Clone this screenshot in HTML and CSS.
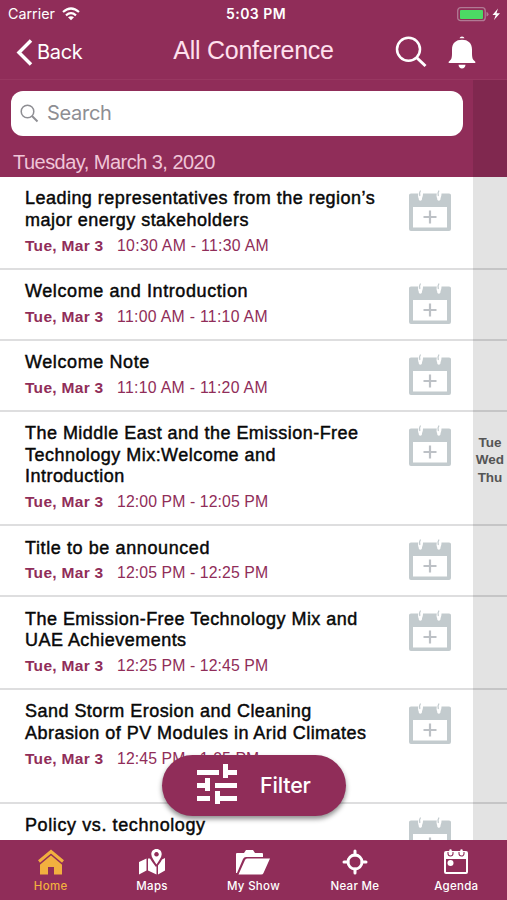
FILE: index.html
```html
<!DOCTYPE html>
<html lang="en">
<head>
<meta charset="utf-8">
<title>All Conference</title>
<link rel="stylesheet" href="styles.css">
</head>
<body>
<svg class="defs" width="0" height="0">
  <symbol id="cal" viewBox="0 0 42 42">
    <path fill="#c3cbce" d="M2 3.500H9.300C8.800 6 9.200 7 9.700 8.500C9.500 11.500 13.200 11.500 13 8.500C13.300 7 14 6 14 3.500H27.800C27.300 6 27.700 7 28.200 8.500C28 11.500 31.700 11.500 31.500 8.500C31.800 7 32.500 6 32.500 3.500H40Q42 3.500 42 5V39Q42 41 40 41H2Q0 41 0 39V5Q0 3.500 2 3.500ZM4 17V37.500H38V17Z"/>
    <path fill="none" stroke="#c3cbce" stroke-width="1.300" stroke-linecap="round" d="M11.300 1Q10 3 10.800 5.500M29.800 1Q28.500 3 29.300 5.500"/>
    <path fill="none" stroke="#bdc1c6" stroke-width="2.200" d="M14.500 27H27.500M21 20.500V33.500"/>
  </symbol>
</svg>
<div class="app">
  <header class="status">
    <span class="carrier">Carrier</span>
    <svg class="wifi" width="18" height="14" viewBox="0 0 18 14"><path fill="none" stroke="#fff" stroke-width="2.200" d="M1 5Q9-2 17 5M4 8.300Q9 4 14 8.300"/><path fill="#fff" d="M6 10.300Q9 8 12 10.300L9 13.300Z"/></svg>
    <span class="clock">5:03 PM</span>
    <svg class="battery" width="46" height="16" viewBox="0 0 46 16"><rect x=".7" y="1.700" width="27.500" height="13" rx="3" fill="none" stroke="#b17a94" stroke-width="1.300"/><rect x="3" y="4" width="23" height="9" rx="1" fill="#4cd964"/><path fill="#b17a94" d="M29.500 6Q31.500 6.500 31.500 8.200T29.500 10.500Z"/><path fill="#fff" d="M41 2.500L35.500 9H38.700L37 14L43 7.200H39.500Z"/></svg>
  </header>
  <nav class="navbar">
    <svg class="chevron" width="17" height="27" viewBox="0 0 17 27"><path fill="none" stroke="#fff" stroke-width="3.500" d="M15 1.500L3 13.500L15 25.500"/></svg>
    <span class="back">Back</span>
    <h1>All Conference</h1>
    <svg class="find" width="32" height="32" viewBox="0 0 32 32"><circle cx="13.500" cy="13.300" r="11.500" fill="none" stroke="#fff" stroke-width="2.500"/><path stroke="#fff" stroke-width="3" d="M21.500 21.500L30.500 30"/></svg>
    <svg class="bell" width="28" height="33" viewBox="0 0 28 33"><path fill="#fff" d="M11.500 2.300Q12 .5 14 .5T16.500 2.300ZM.7 27Q0 25.500 2 24.500Q4 23 4 18V13.500C4 7 8 3.700 14 3.700S24 7 24 13.500V18Q24 23 26 24.500Q28 25.500 27.300 27ZM10.500 28.700H17.500Q17 32.500 14 32.500T10.500 28.700Z"/></svg>
  </nav>
  <main class="content">
    <section class="top">
      <div class="search"><svg width="19" height="19" viewBox="0 0 19 19"><circle cx="7.500" cy="7.500" r="6.300" fill="none" stroke="#8e8e93" stroke-width="1.500"/><path stroke="#8e8e93" stroke-width="2" d="M12 12L17.500 17.500"/></svg><span>Search</span></div>
      <h2>Tuesday, March 3, 2020</h2>
    </section>
    <ul class="list">
      <li class="row"><div class="text"><h3>Leading representatives from the region’s<br>major energy stakeholders</h3><p><b>Tue, Mar 3</b><span class="ones">10:30 AM - 11:30 AM</span></p></div><svg class="cal"><use href="#cal"/></svg></li>
      <li class="row"><div class="text"><h3 class="wide">Welcome and Introduction</h3><p><b>Tue, Mar 3</b><span class="ones">11:00 AM - 11:10 AM</span></p></div><svg class="cal"><use href="#cal"/></svg></li>
      <li class="row"><div class="text"><h3 class="wide">Welcome Note</h3><p><b>Tue, Mar 3</b><span class="ones">11:10 AM - 11:20 AM</span></p></div><svg class="cal"><use href="#cal"/></svg></li>
      <li class="row"><div class="text"><h3>The Middle East and the Emission-Free<br>Technology Mix:Welcome and<br>Introduction</h3><p><b>Tue, Mar 3</b><span>12:00 PM - 12:05 PM</span></p></div><svg class="cal"><use href="#cal"/></svg></li>
      <li class="row"><div class="text"><h3 class="wide">Title to be announced</h3><p><b>Tue, Mar 3</b><span>12:05 PM - 12:25 PM</span></p></div><svg class="cal"><use href="#cal"/></svg></li>
      <li class="row"><div class="text"><h3>The Emission-Free Technology Mix and<br>UAE Achievements</h3><p><b>Tue, Mar 3</b><span>12:25 PM - 12:45 PM</span></p></div><svg class="cal"><use href="#cal"/></svg></li>
      <li class="row tall"><div class="text"><h3>Sand Storm Erosion and Cleaning<br>Abrasion of PV Modules in Arid Climates</h3><p><b>Tue, Mar 3</b><span>12:45 PM - 1:05 PM</span></p></div><svg class="cal"><use href="#cal"/></svg></li>
      <li class="row"><div class="text"><h3 class="wide">Policy vs. technology</h3></div><svg class="cal"><use href="#cal"/></svg></li>
    </ul>
    <aside class="index"><span>Tue</span><span>Wed</span><span>Thu</span></aside>
    <button class="filter"><svg width="42" height="42" viewBox="0 0 42 42"><path fill="#fff" d="M1 6H23V11H1ZM27 0H32V6H41V11H32V14H27ZM1 19H9V14H14V27H9V24H1ZM19 19H41V24H19ZM1 32H14V37H1ZM19 27H24V32H41V37H24V40H19Z"/></svg><span>Filter</span></button>
  </main>
  <footer class="tabs">
    <div class="tab active"><svg width="26" height="26" viewBox="0 0 26 26"><path fill="currentColor" d="M13 4L24 13.500V25.500H16V18H10V25.500H2V13.500Z"/><path fill="none" stroke="#902d59" stroke-width="5" d="M0 14L13 3L26 14"/><path fill="none" stroke="currentColor" stroke-width="3" d="M1 12.500L13 2.500L25 12.500"/></svg><span>Home</span></div>
    <div class="tab"><svg width="26" height="26" viewBox="0 0 26 26"><path fill="currentColor" d="M0 13L7.500 9.500V21.500L0 25.500ZM9 9.500H11Q13 13 17 18L17.500 17V25.500L9 21.500ZM19 16.500Q22 13 23 10.500L26 9V21.500L19 25.500Z"/><path fill="currentColor" fill-rule="evenodd" d="M17.500 0C21 0 22.700 2.500 22.700 5.200C22.700 8.500 19.500 12 17.500 15.500C15.500 12 12.300 8.500 12.300 5.200C12.300 2.500 14.200 0 17.500 0ZM17.500 3A2.300 2.300 0 1 0 17.510 3Z"/></svg><span>Maps</span></div>
    <div class="tab"><svg width="36" height="26" viewBox="0 0 36 26"><path fill="currentColor" d="M1 24V5Q1 4 2 4H9L11 1H18L20 4H27Q28 4 28 5V8H11Q9 8 8 10L2 24Z"/><path fill="currentColor" d="M12 9.500H35L28.500 24Q28 25.500 26 25.500H3.500L10 11Q10.600 9.500 12 9.500Z"/></svg><span>My Show</span></div>
    <div class="tab"><svg width="26" height="26" viewBox="0 0 26 26"><circle cx="13" cy="13" r="7" fill="none" stroke="currentColor" stroke-width="2.800"/><path stroke="currentColor" stroke-width="3" stroke-linecap="round" d="M13 2V6M13 20V24M2 13H6M20 13H24"/></svg><span>Near Me</span></div>
    <div class="tab"><svg width="26" height="26" viewBox="0 0 26 26"><path fill="currentColor" fill-rule="evenodd" d="M3 2H23Q25 2 25 4V23Q25 25 23 25H3Q1 25 1 23V4Q1 2 3 2ZM3 10V23H23V10Z"/><path fill="none" stroke="#902d59" stroke-width="1.100" d="M5 3V4.500A2.500 2.500 0 0 0 10 4.500V3M16 3V4.500A2.500 2.500 0 0 0 21 4.500V3"/><path stroke="currentColor" stroke-width="2.500" stroke-linecap="round" d="M7.500 1.500V4M18.500 1.500V4"/><circle cx="7.500" cy="14" r="3" fill="currentColor"/></svg><span>Agenda</span></div>
  </footer>
</div>
</body>
</html>
```
FILE: styles.css
```css
* { box-sizing: border-box; margin: 0; padding: 0; }
body { width: 507px; height: 900px; overflow: hidden; font-family: "Liberation Sans", Arial, sans-serif; background: #fff; }
.defs { position: absolute; }
.app { height: 900px; display: flex; flex-direction: column; }
.status { height: 26px; flex: none; background: #902d59; color: #fff; display: grid; grid-template-columns: 54px 131px 126px 1fr; align-items: center; padding: 1px 4px 0 8px; }
.carrier { font: 14.300px Inter, sans-serif; letter-spacing: 0; }
.clock { font: 600 14px Inter, sans-serif; letter-spacing: .45px; text-align: center; }
.battery { justify-self: end; }
.navbar { height: 54px; flex: none; background: #902d59; color: #fff; display: flex; align-items: center; padding: 0 31px 1px 16px; border-bottom: 1px solid #983761; }
.back { width: 50px; font: 20px Inter, sans-serif; margin-left: 4px; letter-spacing: -.3px; }
h1 { flex: 1; text-align: center; font-size: 25px; font-weight: 400; color: #ffe0ee; letter-spacing: -.25px; padding-bottom: 3px; padding-left: 25px; }
.find { margin-right: 21px; }
.content { position: relative; height: 760px; flex: none; overflow: hidden; }
.top { height: 97px; background: #902d59; padding: 11px 44px 0 11px; }
.search { height: 45px; background: #fff; border-radius: 12px; display: flex; align-items: center; gap: 8px; padding: 0 9px 1px; color: #8e8e93; font: 20px Inter, sans-serif; letter-spacing: -.3px; }
h2 { font-size: 20px; line-height: 24px; font-weight: 400; color: #efc5d8; padding: 14px 0 0 2px; letter-spacing: -.53px; }
.list { list-style: none; }
.row { display: flex; align-items: flex-start; justify-content: space-between; padding: 11px 56px 12px 25px; border-bottom: 2px solid #dededf; min-height: 71px; }
.tall { min-height: 114px; }
h3 { font-size: 18px; line-height: 21.600px; font-weight: 400; color: #080808; -webkit-text-stroke: .45px #080808; white-space: nowrap; letter-spacing: .47px; position: relative; top: .4px; }
.wide { letter-spacing: .6px; }
.row p { display: flex; gap: 13.500px; font-size: 15.500px; line-height: 24px; padding-top: 2px; height: 24.500px; color: #902d59; white-space: nowrap; position: relative; top: .4px; }
.row b { letter-spacing: .3px; }
.row p span { letter-spacing: .1px; font-size: 15.800px; }
.row p .ones { letter-spacing: .3px; }
.cal { width: 42px; height: 42px; flex: none; margin-top: 2px; }
.index { position: absolute; top: 0; right: 0; width: 34px; height: 100%; background: rgba(0,0,0,.11); display: flex; flex-direction: column; align-items: center; justify-content: center; font-size: 13.500px; line-height: 17.500px; font-weight: 700; color: #555; }
.filter { position: absolute; left: 162px; top: 675px; width: 184px; height: 61px; border: 0; border-radius: 31px; background: #902d59; color: #fff; box-shadow: 0 3px 5px rgba(0,0,0,.45); display: flex; align-items: center; gap: 22px; padding: 0 0 2px 34px; font: 500 21.500px Inter, sans-serif; letter-spacing: -.2px; }
.tabs { height: 60px; flex: none; background: #902d59; color: #fff; display: grid; grid-template-columns: repeat(5, 1fr); }
.tab { display: flex; flex-direction: column; align-items: center; padding-top: 9px; gap: 3px; font: 500 11.500px/16px Inter, sans-serif; letter-spacing: .3px; }
.active { color: #f2b03f; }
```
